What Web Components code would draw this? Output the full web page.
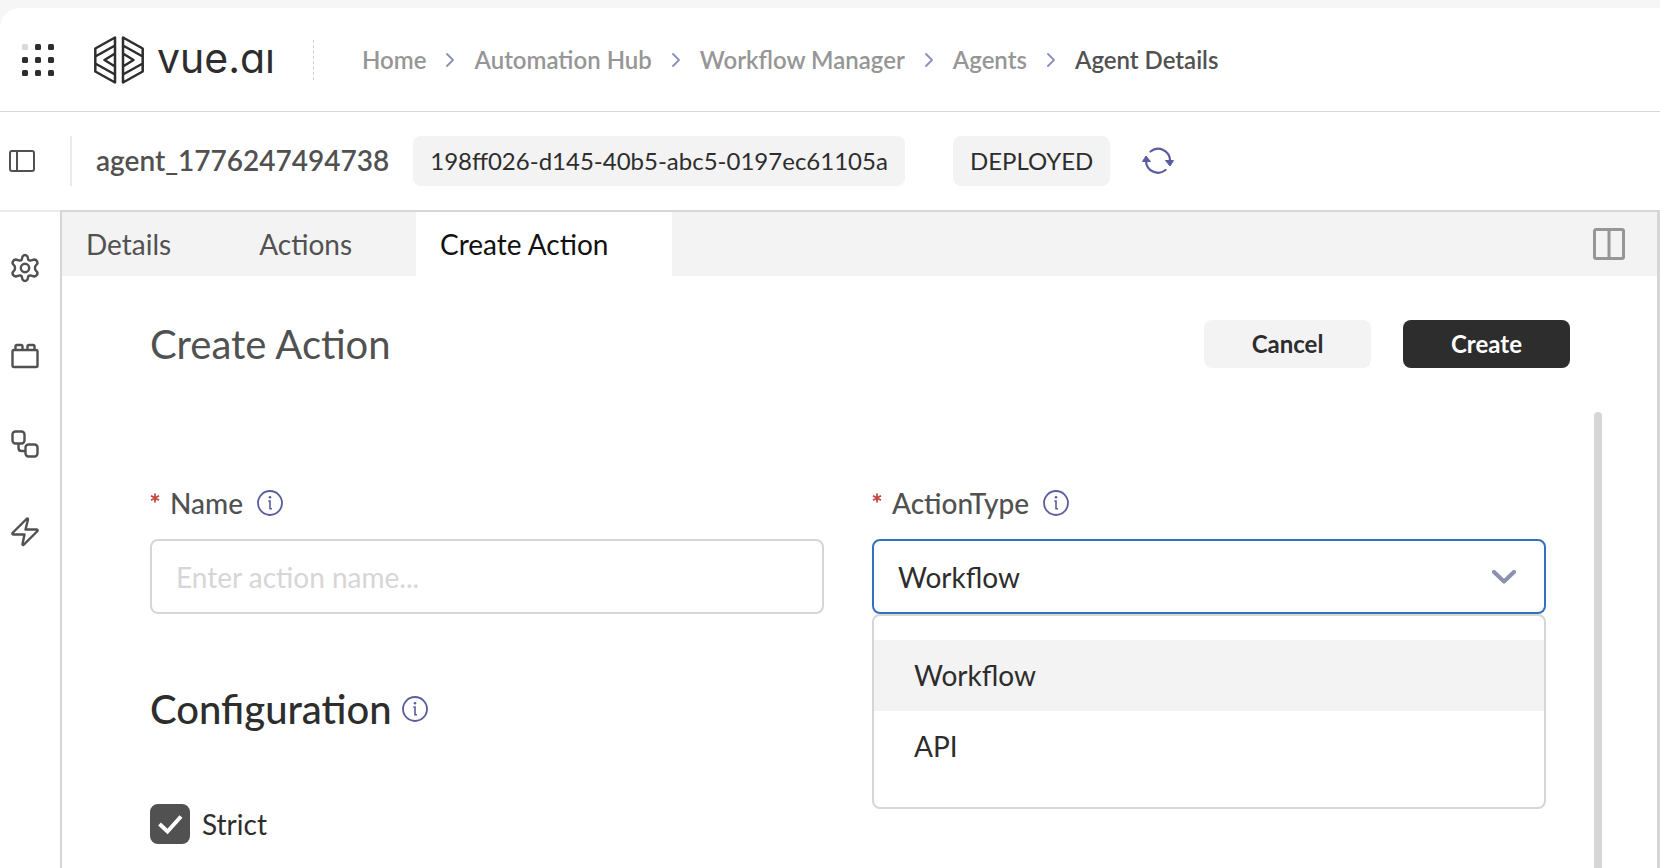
<!DOCTYPE html>
<html lang="en">
<head>
<meta charset="utf-8">
<title>Agent Details</title>
<style>
  html { background: #f6f6f6; }
  body { margin: 0; font-family: Lato, "Open Sans", sans-serif; color: #2d2d2d; }
</style>
</head>
<body>
<agent-app></agent-app>
<script>
const define = (name, html, setup) => {
  const template = document.createElement('template');
  template.innerHTML = '<style>*{box-sizing:border-box}:host([hidden]){display:none}</style>' + html;
  customElements.define(name, class extends HTMLElement {
    constructor() {
      super();
      this.attachShadow({ mode: 'open' }).append(template.content.cloneNode(true));
    }
    connectedCallback() { if (setup) setup(this, this.shadowRoot); }
  });
};

const icons = {
  apps: [32, 32, `<g fill="#2d2d2d"><rect width="6" height="6" rx="1.5" fill="#d9d9d9"/><rect x="13" width="6" height="6" rx="1.5"/><rect x="26" width="6" height="6" rx="1.5"/><rect y="13" width="6" height="6" rx="1.5"/><rect x="13" y="13" width="6" height="6" rx="1.5"/><rect x="26" y="13" width="6" height="6" rx="1.5"/><rect y="26" width="6" height="6" rx="1.5"/><rect x="13" y="26" width="6" height="6" rx="1.5"/><rect x="26" y="26" width="6" height="6" rx="1.5"/></g>`],
  mark: [50, 48, `<g fill="none" stroke="#2d2d2d" stroke-width="2.5" stroke-linejoin="round"><path d="M21 1.5 1.3 12.500v23L21 46.500zM21 9.500 1.300 20.500M21 38.500 1.300 27.500M21 17.500 10.500 24 21 30.500"/><path d="M29 1.500 48.700 12.500v23L29 46.500zM29 9.500l19.700 11M29 38.500l19.700-11M29 17.500 39.500 24 29 30.500"/></g>`],
  chevron: [8, 14, `<path d="M1 1l6 6-6 6" fill="none" stroke="#8c8fb8" stroke-width="1.8" stroke-linecap="round" stroke-linejoin="round"/>`],
  sidebar: [26, 22, `<path d="M3 1h20a2 2 0 0 1 2 2v16a2 2 0 0 1-2 2H3a2 2 0 0 1-2-2V3a2 2 0 0 1 2-2zM8 1v20" fill="none" stroke="#515151" stroke-width="2"/>`],
  refresh: [32, 28, `<g fill="none" stroke="#5b5c9d" stroke-width="2.2" stroke-linecap="round"><path d="M8.500 4.500A12 12 0 0 1 28 14M4 14a12 12 0 0 0 19.500 9"/></g><path d="M23.500 13.500h8L28 19zM.5 14.500h8L4 9z" fill="#5b5c9d" stroke="#5b5c9d" stroke-linejoin="round"/>`],
  gear: [28, 30, `<g fill="none" stroke="#515151" stroke-width="2.400" stroke-linejoin="round"><circle cx="14" cy="15" r="4.200"/><path d="M11.500 3.500Q14 .500 16.500 3.500L17.300 6.800Q18.500 7.900 20.300 7.400L23.300 6.500Q26.500 7 26.500 10.500L24.400 13Q23.600 15 24.400 17L26.500 19.500Q26.500 23 23.300 23.500L20.300 22.600Q18.500 22.100 17.300 23.200L16.500 26.500Q14 29.500 11.500 26.500L10.700 23.200Q9.500 22.100 7.700 22.600L4.700 23.500Q1.500 23 1.500 19.500L3.600 17Q4.400 15 3.600 13L1.500 10.500Q1.500 7 4.700 6.500L7.700 7.400Q9.500 7.900 10.700 6.800z"/></g>`],
  brick: [28, 26, `<g fill="none" stroke="#515151" stroke-width="2.400" stroke-linejoin="round"><rect x="1.500" y="7" width="25" height="17" rx="1.500"/><path d="M4.500 7V3.500Q4.500 2 6 2h4q1.500 0 1.500 1.500V7M16.500 7V3.500Q16.500 2 18 2h4q1.500 0 1.500 1.500V7"/></g>`],
  flow: [28, 28, `<g fill="none" stroke="#515151" stroke-width="2.400"><rect x="1.500" y="1.500" width="12" height="12" rx="3"/><rect x="14.500" y="14.500" width="12" height="12" rx="3"/><path d="M7.500 13.500V18q0 3 3 3h4"/></g>`],
  bolt: [28, 30, `<path d="M16 1.500 1.500 16q-.500 1.500 1 1.500h11L11.500 27q0 1.500 1 1L26.500 14q.500-1.500-1-1.500h-11l2.500-10Q17 1 16 1.500z" fill="none" stroke="#515151" stroke-width="2.400" stroke-linejoin="round"/>`],
  columns: [32, 32, `<path d="M3 1.500h26A1.500 1.500 0 0 1 30.500 3v26a1.500 1.500 0 0 1-1.500 1.500H3A1.500 1.500 0 0 1 1.500 29V3A1.500 1.500 0 0 1 3 1.500zM16 1.500v29" fill="none" stroke="#969696" stroke-width="3"/>`],
  info: [26, 26, `<circle cx="13" cy="13" r="12" fill="none" stroke="#5b5c9d" stroke-width="1.800"/><circle cx="13" cy="7.200" r="1.300" fill="#5b5c9d"/><path d="M11.300 11H13v7.800h2" fill="none" stroke="#5b5c9d" stroke-width="1.600"/>`],
  down: [24, 14, `<path d="M2 2l10 9.500L22 2" fill="none" stroke="#8c8fb0" stroke-width="4" stroke-linecap="round" stroke-linejoin="round"/>`],
  star: [10, 10, `<path d="M5 .5v9M1 2.800l8 4.400M1 7.200l8-4.400" stroke="#c4473d" stroke-width="1.800"/>`],
};

define('ui-icon', `<style>:host{display:block;flex:none}svg{display:block}</style>`, (host, root) => {
  const [w, h, body] = icons[host.getAttribute('name')];
  root.querySelector('svg')?.remove();
  root.append(document.createRange().createContextualFragment(
    `<svg width="${w}" height="${h}" viewBox="0 0 ${w} ${h}" aria-hidden="true">${body}</svg>`));
});

define('brand-logo', `
<style>
  :host{display:block}
  a{display:flex;align-items:center;gap:13px;height:48px;color:#2d2d2d;text-decoration:none}
  span{display:block;padding-bottom:4px;line-height:44px;font-family:Inter,Lato,sans-serif;font-size:41px;font-feature-settings:"cv11"}
</style>
<a href="#" aria-label="vue.ai home"><ui-icon name="mark"></ui-icon><span>vue.aı</span></a>`);

define('bread-crumbs', `
<style>
  :host{display:block}
  ol{display:flex;align-items:center;gap:20px;margin:0;padding:0;list-style:none;font-size:24px;line-height:32px;font-weight:600;white-space:nowrap}
  li{display:flex;align-items:center;gap:20px}
  a{color:#969696;text-decoration:none}
  li:last-child{color:#515151}
</style>
<nav aria-label="Breadcrumb"><ol>
  <li><a href="#">Home</a><ui-icon name="chevron"></ui-icon></li>
  <li><a href="#">Automation Hub</a><ui-icon name="chevron"></ui-icon></li>
  <li><a href="#">Workflow Manager</a><ui-icon name="chevron"></ui-icon></li>
  <li><a href="#">Agents</a><ui-icon name="chevron"></ui-icon></li>
  <li aria-current="page">Agent Details</li>
</ol></nav>`);

define('app-header', `
<style>
  :host{display:block}
  header{display:flex;align-items:center;height:104px;padding:0 22px;background:#fff;border-bottom:1px solid #d6d6d6;border-top-left-radius:20px}
  button{padding:0;border:0;background:none}
  brand-logo{margin-left:40px}
  bread-crumbs{margin-left:48px}
  i{height:40px;margin-left:38px;border-left:1px dashed #d0d0d0}
</style>
<header>
  <button aria-label="Apps"><ui-icon name="apps"></ui-icon></button>
  <brand-logo></brand-logo><i></i><bread-crumbs></bread-crumbs>
</header>`);

define('tag-chip', `
<style>:host{display:block;padding:0 17px;border-radius:8px;background:#f3f3f3;font-size:24px;line-height:50px;white-space:nowrap}</style><slot></slot>`);

define('agent-bar', `
<style>
  :host{display:flex;align-items:center;height:98px;padding:0 9px;background:#fff}
  button{padding:0;border:0;background:none}
  i{height:50px;margin:0 24px 0 35px;border-left:2px solid #ebebeb}
  h1{margin:0 24px 2px 0;font-size:28px;line-height:36px;font-weight:600;color:#515151}
  .state{margin:0 32px 0 48px}
</style>
<button aria-label="Toggle sidebar"><ui-icon name="sidebar"></ui-icon></button><i></i>
<h1>agent_1776247494738</h1>
<tag-chip>198ff026-d145-40b5-abc5-0197ec61105a</tag-chip>
<tag-chip class="state">DEPLOYED</tag-chip>
<button aria-label="Refresh"><ui-icon name="refresh"></ui-icon></button>`);

define('side-rail', `
<style>
  :host{display:block;flex:none;width:60px;border-top:2px solid #ebebeb;background:#fff}
  nav{display:flex;flex-direction:column;padding-top:12px}
  button{display:grid;place-items:center;width:50px;height:88px;padding:0;border:0;background:none}
</style>
<nav aria-label="Sections">
  <button aria-label="Settings"><ui-icon name="gear"></ui-icon></button>
  <button aria-label="Blocks"><ui-icon name="brick"></ui-icon></button>
  <button aria-label="Flow"><ui-icon name="flow"></ui-icon></button>
  <button aria-label="Triggers"><ui-icon name="bolt"></ui-icon></button>
</nav>`);

define('tab-strip', `
<style>
  :host{display:flex;align-items:center;height:64px;padding-right:32px;background:#f3f3f3}
  div{display:flex;height:100%;flex:1}
  button{padding:0;border:0;background:none;font:inherit;color:#515151}
  [role=tab]{padding:0 64px 0 24px;font-size:28px;line-height:36px}
  [aria-selected=true]{background:#fff;color:#111}
</style>
<div role="tablist">
  <button role="tab">Details</button><button role="tab">Actions</button><button role="tab" aria-selected="true">Create Action</button>
</div>
<button aria-label="Split view"><ui-icon name="columns"></ui-icon></button>`);

define('ui-button', `
<style>
  :host{display:block}
  button{display:block;width:167px;height:48px;padding:0;border:0;border-radius:8px;background:#f3f3f3;color:#2d2d2d;font:700 24px/32px Lato,sans-serif}
  :host([primary]) button{background:#2d2d2d;color:#fff}
</style>
<button><slot></slot></button>`);

const fieldStyle = `
  :host{display:block;position:relative}
  .label{display:flex;align-items:center;gap:14px;height:36px;margin-bottom:18px;font-size:28px;line-height:36px;font-weight:500;color:#515151}
  label{display:flex;gap:10px}
  label ui-icon{padding-top:8px}
  input,select{display:block;width:100%;height:75px;margin:0;padding:0 24px;border:2px solid #d6d6d6;border-radius:8px;outline:0;background:#fff;color:#2d2d2d;font:400 28px/36px Lato,sans-serif;appearance:none}
  input::placeholder{color:#d6d6d6;opacity:1}`;

define('text-field', `
<style>${fieldStyle}</style>
<div class="label"><label for="name"><ui-icon name="star"></ui-icon>Name</label><ui-icon name="info"></ui-icon></div>
<input id="name" type="text" placeholder="Enter action name..." required>`);

define('select-field', `
<style>${fieldStyle}
  .box{position:relative}
  select{border-color:#3272bd}
  .box ui-icon{position:absolute;right:30px;top:31px;pointer-events:none}
  ul{position:absolute;z-index:1;left:0;right:0;top:100%;height:195px;margin:0;padding:24px 0;border:2px solid #d6d6d6;border-radius:8px;background:#fff;list-style:none;font-size:28px;line-height:71px}
  li{padding:0 40px}
  [aria-selected=true]{background:#f3f3f3}
</style>
<div class="label"><label for="type"><ui-icon name="star"></ui-icon>ActionType</label><ui-icon name="info"></ui-icon></div>
<div class="box">
  <select id="type"><option>Workflow</option><option>API</option></select>
  <ui-icon name="down"></ui-icon>
</div>
<ul role="listbox" aria-label="ActionType"><li role="option" aria-selected="true">Workflow</li><li role="option">API</li></ul>`);

define('check-field', `
<style>
  :host{display:block}
  label{display:inline-flex;align-items:center;gap:12px;font-size:28px;line-height:36px}
  input{width:40px;height:40px;margin:0;appearance:none;border-radius:8px;background:#fff;border:2px solid #515151}
  input:checked{background:#515151 url('data:image/svg+xml,<svg xmlns="http://www.w3.org/2000/svg" width="36" height="36"><path d="M7.500 18l8 7.500L29 10.500" fill="none" stroke="white" stroke-width="4"/></svg>') center/36px no-repeat}
</style>
<label><input type="checkbox" checked><slot></slot></label>`);

define('action-form', `
<style>
  :host{display:flex;flex-direction:column;flex:1;padding:44px 55px 0 88px;background:#fff}
  .head{display:flex;align-items:center;gap:32px;height:48px;margin:0 32px 44px 0}
  h2,h3{margin:0;font-size:40px;line-height:48px}
  h2{flex:1;font-weight:400;color:#515151}
  .body{display:flex;flex:1;gap:48px}
  form{flex:1;padding:73px 0 24px}
  .row{display:grid;grid-template-columns:1fr 1fr;gap:48px}
  .title{display:flex;align-items:center;gap:10px;margin:71px 0}
  h3{font-weight:500}
  .thumb{width:8px;border-radius:4px 4px 0 0;background:#d6d6d6}
</style>
<div class="head"><h2>Create Action</h2><ui-button>Cancel</ui-button><ui-button primary>Create</ui-button></div>
<div class="body">
  <form>
    <div class="row"><text-field></text-field><select-field></select-field></div>
    <div class="title"><h3>Configuration</h3><ui-icon name="info"></ui-icon></div>
    <check-field>Strict</check-field>
  </form>
  <div class="thumb"></div>
</div>`);

define('agent-app', `
<style>
  :host{box-sizing:border-box;display:flex;flex-direction:column;min-height:100vh;padding-top:8px}
  .main{display:flex;flex:1}
  main{display:flex;flex-direction:column;flex:1;min-width:0;border:solid #d6d6d6;border-width:2px 3px 0 2px}
</style>
<app-header></app-header>
<agent-bar></agent-bar>
<div class="main"><side-rail></side-rail><main><tab-strip></tab-strip><action-form></action-form></main></div>`);
</script>
</body>
</html>
